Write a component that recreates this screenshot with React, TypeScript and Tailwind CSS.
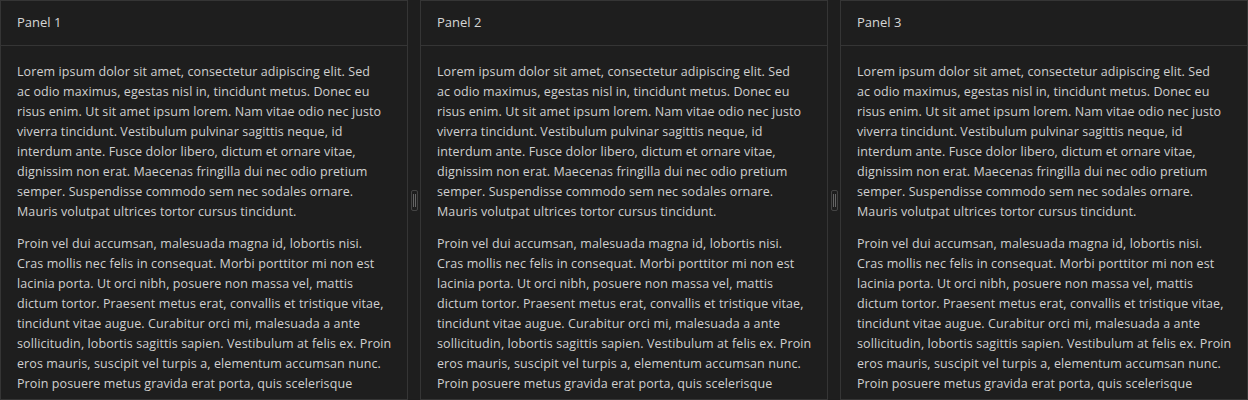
const para1 = [
  "Lorem ipsum dolor sit amet, consectetur adipiscing elit. Sed",
  "ac odio maximus, egestas nisl in, tincidunt metus. Donec eu",
  "risus enim. Ut sit amet ipsum lorem. Nam vitae odio nec justo",
  "viverra tincidunt. Vestibulum pulvinar sagittis neque, id",
  "interdum ante. Fusce dolor libero, dictum et ornare vitae,",
  "dignissim non erat. Maecenas fringilla dui nec odio pretium",
  "semper. Suspendisse commodo sem nec sodales ornare.",
  "Mauris volutpat ultrices tortor cursus tincidunt.",
];

const para2 = [
  "Proin vel dui accumsan, malesuada magna id, lobortis nisi.",
  "Cras mollis nec felis in consequat. Morbi porttitor mi non est",
  "lacinia porta. Ut orci nibh, posuere non massa vel, mattis",
  "dictum tortor. Praesent metus erat, convallis et tristique vitae,",
  "tincidunt vitae augue. Curabitur orci mi, malesuada a ante",
  "sollicitudin, lobortis sagittis sapien. Vestibulum at felis ex. Proin",
  "eros mauris, suscipit vel turpis a, elementum accumsan nunc.",
  "Proin posuere metus gravida erat porta, quis scelerisque",
];

function Paragraph({ lines }: { lines: string[] }) {
  return (
    <p className="mb-3 whitespace-nowrap">
      {lines.map((l, i) => (
        <span key={i} className="block">
          {l}
        </span>
      ))}
    </p>
  );
}

function Panel({ title }: { title: string }) {
  return (
    <div className="flex w-[408px] shrink-0 flex-col border border-[#353535] bg-[#1e1e1e]">
      <div className="flex h-[45px] shrink-0 items-center border-b border-[#353535] px-4 text-[13px] font-medium text-[#d6d6d6]">
        {title}
      </div>
      <div className="shrink-0 px-4 pt-4 text-[12.5px] leading-5 tracking-[0.1px] text-[#d0d0d0]">
        <Paragraph lines={para1} />
        <Paragraph lines={para2} />
      </div>
    </div>
  );
}

function Handle() {
  return (
    <div className="flex w-3 shrink-0 items-center justify-center">
      <div className="flex h-[21px] w-[7px] items-center justify-center gap-[1px] rounded-[2px] border border-[#444]">
        <span className="h-[13px] w-px bg-[#666]" />
        <span className="h-[13px] w-px bg-[#666]" />
      </div>
    </div>
  );
}

export default function App() {
  return (
    <div
      className="flex h-[400px] w-[1248px] overflow-hidden bg-[#1e1e1e]"
      style={{ fontFamily: '"Open Sans", "Noto Sans", sans-serif' }}
    >
      <Panel title="Panel 1" />
      <Handle />
      <Panel title="Panel 2" />
      <Handle />
      <Panel title="Panel 3" />
    </div>
  );
}
